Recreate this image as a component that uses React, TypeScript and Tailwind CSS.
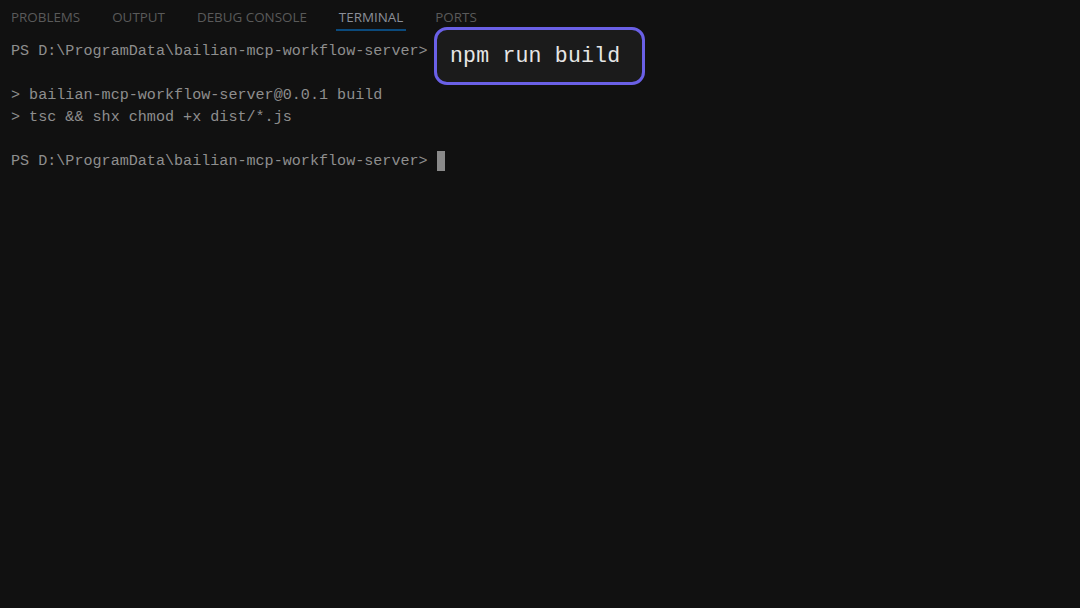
const tabs = ["PROBLEMS", "OUTPUT", "DEBUG CONSOLE", "TERMINAL", "PORTS"];

const mono = "font-['Liberation_Mono','DejaVu_Sans_Mono',monospace]";

export default function App() {
  return (
    <div className="h-[608px] w-[1080px] overflow-hidden bg-[#111111] font-['Open_Sans','Noto_Sans',sans-serif]">
      <div className="flex h-[32px] items-start gap-[32px] pl-[11px] pt-[8px]">
        {tabs.map((t) => (
          <div
            key={t}
            className={
              t === "TERMINAL"
                ? "-mx-[3px] border-b-2 border-[#0b4a7c] px-[3px] pb-[3px] text-[13.4px] leading-[18px] text-[#8b8f99]"
                : "text-[13.4px] leading-[18px] text-[#5a5a5a]"
            }
          >
            {t}
          </div>
        ))}
      </div>

      <div className={`${mono} px-[11px] pt-[8px] text-[15.1px] leading-[22px] text-[#8e8e8e]`}>
        <div className="relative whitespace-pre">
          {"PS D:\\ProgramData\\bailian-mcp-workflow-server>"}
          <div className="absolute left-[423px] top-[-13px] flex h-[58px] w-[211px] items-center rounded-[13px] border-[3px] border-[#6a60e6] bg-[#1b1b1b] pl-[13px]">
            <span className="text-[21.5px] tracking-[0.2px] text-[#e6e6e6]">npm run build</span>
          </div>
        </div>
        <div className="h-[22px]" />
        <div className="whitespace-pre">{"> bailian-mcp-workflow-server@0.0.1 build"}</div>
        <div className="whitespace-pre">{"> tsc && shx chmod +x dist/*.js"}</div>
        <div className="h-[22px]" />
        <div className="flex items-center whitespace-pre">
          {"PS D:\\ProgramData\\bailian-mcp-workflow-server>"}
          <span className="ml-[9px] inline-block h-[20px] w-[8px] bg-[#8a8a8a]" />
        </div>
      </div>
    </div>
  );
}
